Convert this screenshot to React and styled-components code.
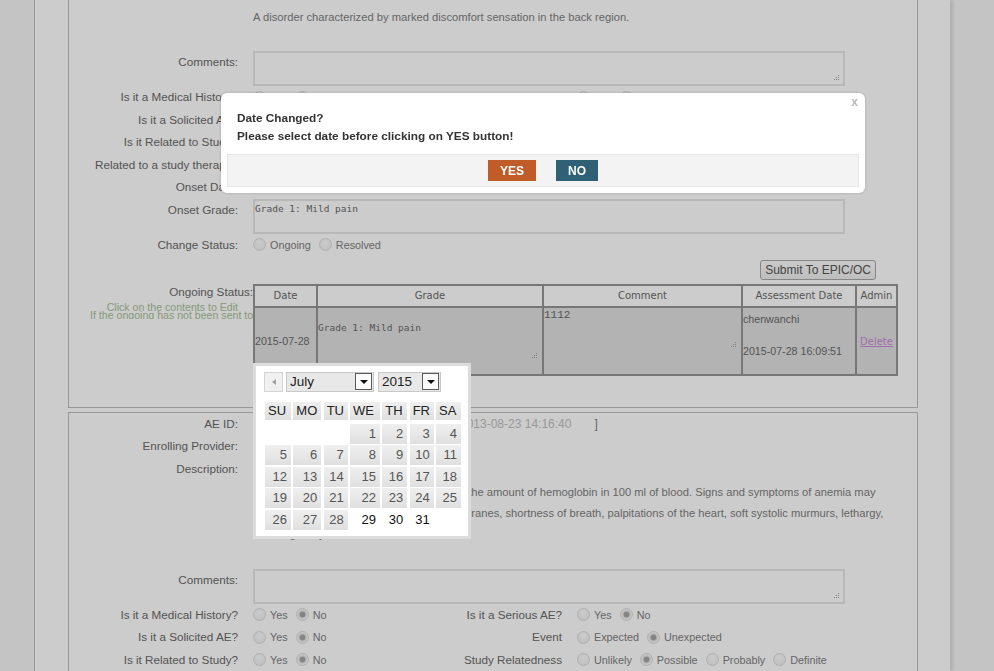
import styled, { createGlobalStyle } from "styled-components";

const GlobalStyle = createGlobalStyle`
  html, body {
    margin: 0;
    overflow: hidden;
  }
  body {
    background: #f5f5f5;
    font-family: "Liberation Sans", Arial, sans-serif;
  }
`

const Shell = styled.div`
  display: flex;
  flex-direction: column;
  align-items: flex-start;
  margin-left: 34px;
  width: 882px;
  height: 671px;
  padding-left: 33px;
  border-left: 1px solid #bfbfbf;
  background: #fff;
  box-shadow: 3px 0 3px rgba(0, 0, 0, 0.1);
  overflow: hidden;
`
const Panel = styled.section`
  box-sizing: border-box;
  flex: none;
  width: 850px;
  margin-top: ${p => p.$offset || 0}px;
  padding-bottom: ${p => p.$padBottom || 0}px;
  border: 1px solid #bfbfbf;
`
const FormRow = styled.div`
  display: grid;
  grid-template-columns: ${p => p.$pair ? "169px 150px 144px 1fr" : "169px 1fr"};
  column-gap: 15px;
  align-items: start;
  min-height: 22.5px;
`
const Label = styled.div`
  text-align: right;
  font-size: 11.7px;
  line-height: ${p => p.$lh || "22.5px"};
  color: #6a6a6a;
  white-space: nowrap;
`
const Value = styled.div`
  display: flex;
  align-items: center;
  min-height: 22.5px;
  font-size: 12px;
  color: #808080;
`
const DescTitle = styled.div`
  font-size: 11.2px;
  line-height: 22.5px;
  color: #808080;
`
const DescText = styled.p`
  margin: 2px 0 23.5px;
  font-size: 11.2px;
  line-height: 21px;
  color: #808080;
`
const DescLine = styled.span`
  display: block;
  white-space: nowrap;
`
const TextBox = styled.div`
  position: relative;
  box-sizing: border-box;
  width: 592px;
  height: 35px;
  padding: 2px 0;
  border: 2px solid #e6e6e6;
  background: #fff;
  font-family: "DejaVu Sans Mono", monospace;
  font-size: 9.5px;
  line-height: 11px;
  color: #6a6a6a;
`
const GripIcon = styled.svg`
  position: absolute;
  right: ${p => p.$right || 3}px;
  bottom: ${p => p.$bottom || 2}px;
`
const RadioGroup = styled.div`
  display: flex;
  align-items: center;
  height: 22.5px;
`
const RadioOption = styled.label`
  display: inline-flex;
  align-items: center;
  margin-right: 8px;
  font-size: 10.8px;
  color: #808080;
`
const RadioDot = styled.span`
  flex: none;
  box-sizing: border-box;
  width: 13px;
  height: 13px;
  margin-right: 4px;
  border-radius: 50%;
  border: 1px solid #dcdcdc;
  background: ${p => p.$checked
    ? "radial-gradient(circle, #a6a6a6 0 2.6px, #dedede 3.2px 3.8px, #f7f7f7 4.4px)"
    : "radial-gradient(circle at 50% 35%, #ffffff, #ececec)"};
`
const ActionBar = styled.div`
  display: flex;
  justify-content: flex-end;
  width: 623px;
  padding: 3.5px 0 4px;
`
const SubmitButton = styled.button`
  height: 20px;
  padding: 0 4px;
  border: 1px solid #a8a8a8;
  border-radius: 3px;
  background: linear-gradient(#fdfdfd, #eeeeee);
  font-family: "Liberation Sans", Arial, sans-serif;
  font-size: 12px;
  color: #555;
`
const StatusLabel = styled.div`
  width: 184px;
  overflow: hidden;
`
const Hint = styled.div`
  font-size: 10.6px;
  line-height: 8px;
  color: #aabf97;
  white-space: nowrap;
  text-align: ${p => p.$indent ? "left" : "right"};
  padding: ${p => p.$indent ? "0 0 0 21px" : "0 15px 0 0"};
  margin-top: ${p => p.$gap || 0}px;
`
const TableWrap = styled.div`
  position: relative;
  width: 645px;
`
const StatusTable = styled.table`
  width: 645px;
  table-layout: fixed;
  border-collapse: separate;
  border-spacing: 0;
  border: 1px solid #959595;
`
const HeadCell = styled.th`
  box-sizing: border-box;
  width: ${p => p.$w}px;
  height: 22px;
  padding: 0 0 1px;
  border: 1px solid #959595;
  background: #fff;
  font-family: "DejaVu Sans", Verdana, sans-serif;
  font-size: 10px;
  font-weight: normal;
  color: #6a6a6a;
`
const BodyCell = styled.td`
  box-sizing: border-box;
  height: 68px;
  padding: ${p => p.$pad || "0"};
  border: 1px solid #959595;
  background: #e0e0e0;
  vertical-align: ${p => p.$valign || "middle"};
  text-align: ${p => p.$align || "left"};
  font-size: 10.67px;
  line-height: ${p => p.$lh || "normal"};
  color: #6a6a6a;
`
const CellArea = styled.div`
  position: relative;
  height: 42px;
  padding: 2px 0 0;
  box-sizing: border-box;
  font-family: ${p => p.$courier ? '"Liberation Mono", monospace' : '"DejaVu Sans Mono", monospace'};
  font-size: ${p => p.$courier ? "11px" : "9.5px"};
  line-height: 11px;
  color: #6a6a6a;
`
const DeleteLink = styled.a`
  font-family: "DejaVu Sans", Verdana, sans-serif;
  font-size: 10px;
  color: #cc8ad9;
  text-decoration: underline;
`
const IdCell = styled.span`
  flex: none;
  width: 207px;
`
const Stamp = styled.span`
  color: #c0c0c0;
`
const Bracket = styled.span`
  margin-left: 23px;
  color: #808080;
`
const ProviderBox = styled.div`
  box-sizing: border-box;
  width: 200px;
  height: 17px;
  border: 1px solid #e3d6a2;
`

/* datepicker */
const Picker = styled.div`
  position: absolute;
  left: 0;
  top: 79px;
  z-index: 20;
  box-sizing: border-box;
  width: 218px;
  height: 176px;
  padding: 6px 0 0 8px;
  border: 3px solid #dcdcdc;
  background: #fff;
`
const PickerHead = styled.div`
  display: flex;
  align-items: center;
  gap: 3px;
`
const PrevButton = styled.span`
  display: flex;
  align-items: center;
  justify-content: center;
  box-sizing: border-box;
  width: 19px;
  height: 20px;
  border: 1px solid #d4d4d4;
  background: #f0f0f0;
  &::before {
    content: "";
    border-style: solid;
    border-width: 3px 4px 3px 0;
    border-color: transparent #a0a0a0 transparent transparent;
  }
`
const FakeSelect = styled.div`
  display: flex;
  align-items: center;
  justify-content: space-between;
  box-sizing: border-box;
  width: ${p => p.$w}px;
  height: 20px;
  margin-left: ${p => p.$gap || 0}px;
  padding-left: 3px;
  border: 1px solid #c8c8c8;
  background: #e8e8e8;
  font-size: 13.5px;
  color: #222;
`
const SelectArrow = styled.span`
  display: flex;
  align-items: center;
  justify-content: center;
  box-sizing: border-box;
  width: 17px;
  height: 17px;
  margin-right: 1px;
  border: 1px solid #5a5a5a;
  background: #fafafa;
  &::before {
    content: "";
    border-style: solid;
    border-width: 4px 4px 0 4px;
    border-color: #111 transparent transparent transparent;
  }
`
const CalGrid = styled.div`
  display: grid;
  grid-template-columns: 26px 28px 24px 30px 25px 24px 25px;
  column-gap: 2.33px;
  row-gap: 1.5px;
  margin: ${p => p.$head ? "10px 0 0 1px" : "4px 0 0 1px"};
`
const DayName = styled.span`
  height: 18px;
  padding-left: 3px;
  background: linear-gradient(#efefef, #e7e7e7 50%, #dfdfdf);
  font-size: 13px;
  line-height: 18px;
  color: #222;
`
const DayCell = styled.span`
  height: 20px;
  padding-right: 4px;
  text-align: right;
  font-size: 13px;
  line-height: 20px;
  color: ${p => p.$off ? "#111" : "#555"};
  background: ${p => p.$off || p.$blank ? "transparent" : "linear-gradient(#efefef, #e8e8e8 50%, #dfdfdf)"};
`

/* dialog */
const Overlay = styled.div`
  position: fixed;
  inset: 0;
  z-index: 10;
  background: rgba(0, 0, 0, 0.2);
`
const Dialog = styled.div`
  position: fixed;
  left: 221px;
  top: 93px;
  z-index: 30;
  box-sizing: border-box;
  width: 644px;
  height: 100px;
  padding: 0 6px;
  border-radius: 6px;
  background: #fff;
  box-shadow: 0 0 3px rgba(0, 0, 0, 0.2);
`
const DialogBar = styled.div`
  display: flex;
  justify-content: flex-end;
  height: 16px;
`
const CloseMark = styled.span`
  margin: 3px 1px 0 0;
  font-size: 12px;
  font-weight: bold;
  line-height: 12px;
  color: #b8b8b8;
`
const DialogLine = styled.div`
  padding-left: 10px;
  font-size: 11.8px;
  font-weight: bold;
  line-height: 18px;
  color: #333;
`
const ButtonPane = styled.div`
  display: flex;
  justify-content: center;
  gap: 20px;
  margin-top: 9px;
  padding: 5px 0;
  border: 1px solid #e6e6e6;
  background: #f3f3f3;
`
const DialogButton = styled.button`
  height: 21px;
  padding: 0 12px;
  border: none;
  background: ${p => p.$tone === "yes" ? "#c05c28" : "#2f6075"};
  color: #fff;
  font-family: "Liberation Sans", Arial, sans-serif;
  font-size: 12px;
  font-weight: bold;
`

const Grip = ({ right, bottom }) => (
  <GripIcon width="7" height="7" viewBox="0 0 7 7" $right={right} $bottom={bottom}>
    {[[5, 0], [3, 2], [5, 2], [1, 4], [3, 4], [5, 4]].map(([x, y]) => (
      <rect key={x + "-" + y} x={x} y={y} width="1" height="1" fill="#a0a0a0" />
    ))}
  </GripIcon>
)

const Radios = ({ options, checked }) => (
  <RadioGroup>
    {options.map(o => (
      <RadioOption key={o}>
        <RadioDot $checked={o === checked} />
        {o}
      </RadioOption>
    ))}
  </RadioGroup>
)

const PairRow = ({ label, checked, right, rightOptions, rightChecked }) => (
  <FormRow $pair>
    <Label>{label}</Label>
    <Radios options={["Yes", "No"]} checked={checked} />
    <Label>{right}</Label>
    <Radios options={rightOptions} checked={rightChecked} />
  </FormRow>
)

const Description = ({ title, lines }) => (
  <div>
    <DescTitle>{title}</DescTitle>
    <DescText>
      {lines.map(l => <DescLine key={l}>{l}</DescLine>)}
    </DescText>
  </div>
)

const days = [
  null, null, null, 1, 2, 3, 4,
  5, 6, 7, 8, 9, 10, 11,
  12, 13, 14, 15, 16, 17, 18,
  19, 20, 21, 22, 23, 24, 25,
  26, 27, 28, 29, 30, 31,
]

const DatePicker = () => (
  <Picker>
    <PickerHead>
      <PrevButton />
      <FakeSelect $w={88}>July<SelectArrow /></FakeSelect>
      <FakeSelect $w={63} $gap={1}>2015<SelectArrow /></FakeSelect>
    </PickerHead>
    <CalGrid $head>
      {["SU", "MO", "TU", "WE", "TH", "FR", "SA"].map(d => <DayName key={d}>{d}</DayName>)}
    </CalGrid>
    <CalGrid>
      {days.map((d, i) => (
        <DayCell key={i} $blank={d === null} $off={d > 28}>{d}</DayCell>
      ))}
    </CalGrid>
  </Picker>
)

export default function App() {
  return (
    <>
      <GlobalStyle />
      <Shell>
        <Panel $offset={-19} $padBottom={31}>
          <FormRow>
            <Label>Description:</Label>
            <Description title="Back pain"
              lines={["A disorder characterized by marked discomfort sensation in the back region."]} />
          </FormRow>
          <FormRow>
            <Label>Comments:</Label>
            <TextBox><Grip /></TextBox>
          </FormRow>
          <PairRow label="Is it a Medical History?" checked="No" right="Is it a Serious AE?"
            rightOptions={["Yes", "No"]} rightChecked="No" />
          <PairRow label="Is it a Solicited AE?" checked="No" right="Event"
            rightOptions={["Expected", "Unexpected"]} rightChecked="Unexpected" />
          <PairRow label="Is it Related to Study?" checked="No" right="Study Relatedness"
            rightOptions={["Unlikely", "Possible", "Probably", "Definite"]} rightChecked="Possible" />
          <FormRow>
            <Label>Related to a study therapy?</Label>
            <Radios options={["Yes", "No"]} checked="No" />
          </FormRow>
          <FormRow>
            <Label>Onset Date:</Label>
            <Value>2015-07-28</Value>
          </FormRow>
          <FormRow>
            <Label>Onset Grade:</Label>
            <TextBox>Grade 1: Mild pain</TextBox>
          </FormRow>
          <FormRow>
            <Label>Change Status:</Label>
            <Radios options={["Ongoing", "Resolved"]} />
          </FormRow>
          <FormRow>
            <span />
            <ActionBar>
              <SubmitButton>Submit To EPIC/OC</SubmitButton>
            </ActionBar>
          </FormRow>
          <FormRow>
            <StatusLabel>
              <Label $lh="16px">Ongoing Status:</Label>
              <Hint $gap={3}>Click on the contents to Edit</Hint>
              <Hint $indent>If the ongoing has not been sent to EPIC/OC</Hint>
            </StatusLabel>
            <TableWrap>
              <StatusTable>
                <thead>
                  <tr>
                    <HeadCell $w={63}>Date</HeadCell>
                    <HeadCell $w={226}>Grade</HeadCell>
                    <HeadCell $w={199}>Comment</HeadCell>
                    <HeadCell $w={114}>Assessment Date</HeadCell>
                    <HeadCell $w={41}>Admin</HeadCell>
                  </tr>
                </thead>
                <tbody>
                  <tr>
                    <BodyCell>2015-07-28</BodyCell>
                    <BodyCell>
                      <CellArea>Grade 1: Mild pain<Grip right={4} bottom={2} /></CellArea>
                    </BodyCell>
                    <BodyCell $valign="top">
                      <CellArea $courier>1112<Grip right={4} bottom={1} /></CellArea>
                    </BodyCell>
                    <BodyCell $valign="top" $pad="3px 0 0 0" $lh="16px">
                      chenwanchi<br /><br />2015-07-28 16:09:51
                    </BodyCell>
                    <BodyCell $align="center">
                      <DeleteLink>Delete</DeleteLink>
                    </BodyCell>
                  </tr>
                </tbody>
              </StatusTable>
              <DatePicker />
            </TableWrap>
          </FormRow>
        </Panel>

        <Panel $offset={4}>
          <FormRow>
            <Label>AE ID:</Label>
            <Value>
              <IdCell>1</IdCell>
              <Stamp>2013-08-23 14:16:40</Stamp>
              <Bracket>]</Bracket>
            </Value>
          </FormRow>
          <FormRow>
            <Label>Enrolling Provider:</Label>
            <Value><ProviderBox /></Value>
          </FormRow>
          <FormRow>
            <Label>Description:</Label>
            <Description title="Anemia" lines={[
              "A disorder characterized by an reduction in the amount of hemoglobin in 100 ml of blood. Signs and symptoms of anemia may",
              "include pallor of the skin and mucous membranes, shortness of breath, palpitations of the heart, soft systolic murmurs, lethargy,",
              "and fatigability.",
            ]} />
          </FormRow>
          <FormRow>
            <Label>Comments:</Label>
            <TextBox><Grip /></TextBox>
          </FormRow>
          <PairRow label="Is it a Medical History?" checked="No" right="Is it a Serious AE?"
            rightOptions={["Yes", "No"]} rightChecked="No" />
          <PairRow label="Is it a Solicited AE?" checked="No" right="Event"
            rightOptions={["Expected", "Unexpected"]} rightChecked="Unexpected" />
          <PairRow label="Is it Related to Study?" checked="No" right="Study Relatedness"
            rightOptions={["Unlikely", "Possible", "Probably", "Definite"]} rightChecked="Possible" />
        </Panel>
      </Shell>

      <Overlay />
      <Dialog>
        <DialogBar><CloseMark>x</CloseMark></DialogBar>
        <DialogLine>Date Changed?</DialogLine>
        <DialogLine>Please select date before clicking on YES button!</DialogLine>
        <ButtonPane>
          <DialogButton $tone="yes">YES</DialogButton>
          <DialogButton $tone="no">NO</DialogButton>
        </ButtonPane>
      </Dialog>
    </>
  )
}
